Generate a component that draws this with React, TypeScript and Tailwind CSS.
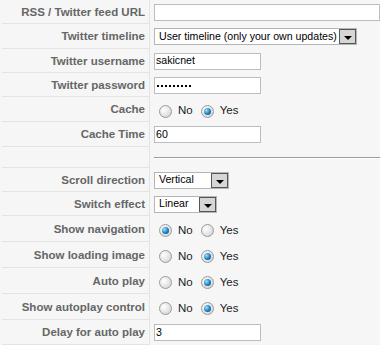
import React from 'react';

const font = { fontFamily: '"Liberation Sans", Arial, sans-serif' };

const Label: React.FC<{ text?: string }> = ({ text }) => (
  <div className="w-[148px] shrink-0 flex items-center justify-end pr-[4px] pt-[2px] bg-[#f6f6f6] border-r border-b border-[#e4e4e4] text-[11.5px] font-bold text-[#666]">
    {text}
  </div>
);

const Radio: React.FC<{ checked?: boolean }> = ({ checked }) => (
  <span className="w-[13px] h-[13px] rounded-full border border-[#9a9a9a] bg-[radial-gradient(circle_at_35%_35%,#ffffff,#dcdcdc_70%,#c4c4c4)] flex items-center justify-center shrink-0">
    {checked && (
      <span className="w-[7px] h-[7px] rounded-full bg-[radial-gradient(circle_at_35%_35%,#9fe0ff,#1a7fc0_55%,#0a3e70)]" />
    )}
  </span>
);

const YesNo: React.FC<{ yes: boolean }> = ({ yes }) => (
  <div className="flex items-center pl-[5px] pt-[3px] text-[11.5px] text-[#222]">
    <Radio checked={!yes} />
    <span className="ml-[6px] mr-[8px]">No</span>
    <Radio checked={yes} />
    <span className="ml-[6px]">Yes</span>
  </div>
);

const TextBox: React.FC<{ value?: string; wide?: boolean; children?: React.ReactNode }> = ({ value, wide, children }) => (
  <div className={`${wide ? 'w-[226px]' : 'w-[107px]'} h-[17px] bg-white border border-[#bdbdbd] flex items-center pl-[1px] text-[10.6px] text-black`}>
    {value}
    {children}
  </div>
);

const Dots: React.FC<{ n: number }> = ({ n }) => (
  <div className="flex gap-[2px] pl-[1px] pt-[2px]">
    {Array.from({ length: n }).map((_, i) => (
      <span key={i} className="w-[2px] h-[2px] bg-black" />
    ))}
  </div>
);

const Select: React.FC<{ value: string; width: string }> = ({ value, width }) => (
  <div className={`${width} h-[17px] bg-white border border-[#b5b5b5] flex items-center text-[10.6px] text-black`}>
    <span className="flex-1 pl-[4px] whitespace-nowrap">{value}</span>
    <span className="w-[17px] h-[15px] border border-[#555] bg-[#d6d6d6] flex items-end justify-center pb-[3px]">
      <span className="w-0 h-0 border-l-[4px] border-r-[4px] border-t-[4px] border-l-transparent border-r-transparent border-t-black" />
    </span>
  </div>
);

const Row: React.FC<{ h: string; label?: string; children?: React.ReactNode }> = ({ h, label, children }) => (
  <div className={`flex ${h}`}>
    <Label text={label} />
    <div className="flex-1 flex items-center pl-[4px]">{children}</div>
  </div>
);

export default function App() {
  return (
    <div className="w-[380px] h-[345px] overflow-hidden bg-[#f6f6f6] pl-[2px]" style={font}>
      <Row h="h-[24px]" label="RSS / Twitter feed URL"><TextBox wide /></Row>
      <Row h="h-[25px]" label="Twitter timeline">
        <Select value="User timeline (only your own updates)" width="w-[203px]" />
      </Row>
      <Row h="h-[24px]" label="Twitter username"><TextBox value="sakicnet" /></Row>
      <Row h="h-[24px]" label="Twitter password">
        <TextBox><Dots n={9} /></TextBox>
      </Row>
      <Row h="h-[25px]" label="Cache"><YesNo yes /></Row>
      <Row h="h-[25px]" label="Cache Time"><TextBox value="60" /></Row>
      <Row h="h-[21px]">
        <div className="w-full border-t border-[#9c9c9c] border-b border-b-white mt-[1px]" />
      </Row>
      <Row h="h-[24px]" label="Scroll direction"><Select value="Vertical" width="w-[75px]" /></Row>
      <Row h="h-[24px]" label="Switch effect"><Select value="Linear" width="w-[63px]" /></Row>
      <Row h="h-[26px]" label="Show navigation"><YesNo yes={false} /></Row>
      <Row h="h-[26px]" label="Show loading image"><YesNo yes /></Row>
      <Row h="h-[26px]" label="Auto play"><YesNo yes /></Row>
      <Row h="h-[26px]" label="Show autoplay control"><YesNo yes /></Row>
      <Row h="h-[25px]" label="Delay for auto play"><TextBox value="3" /></Row>
    </div>
  );
}
